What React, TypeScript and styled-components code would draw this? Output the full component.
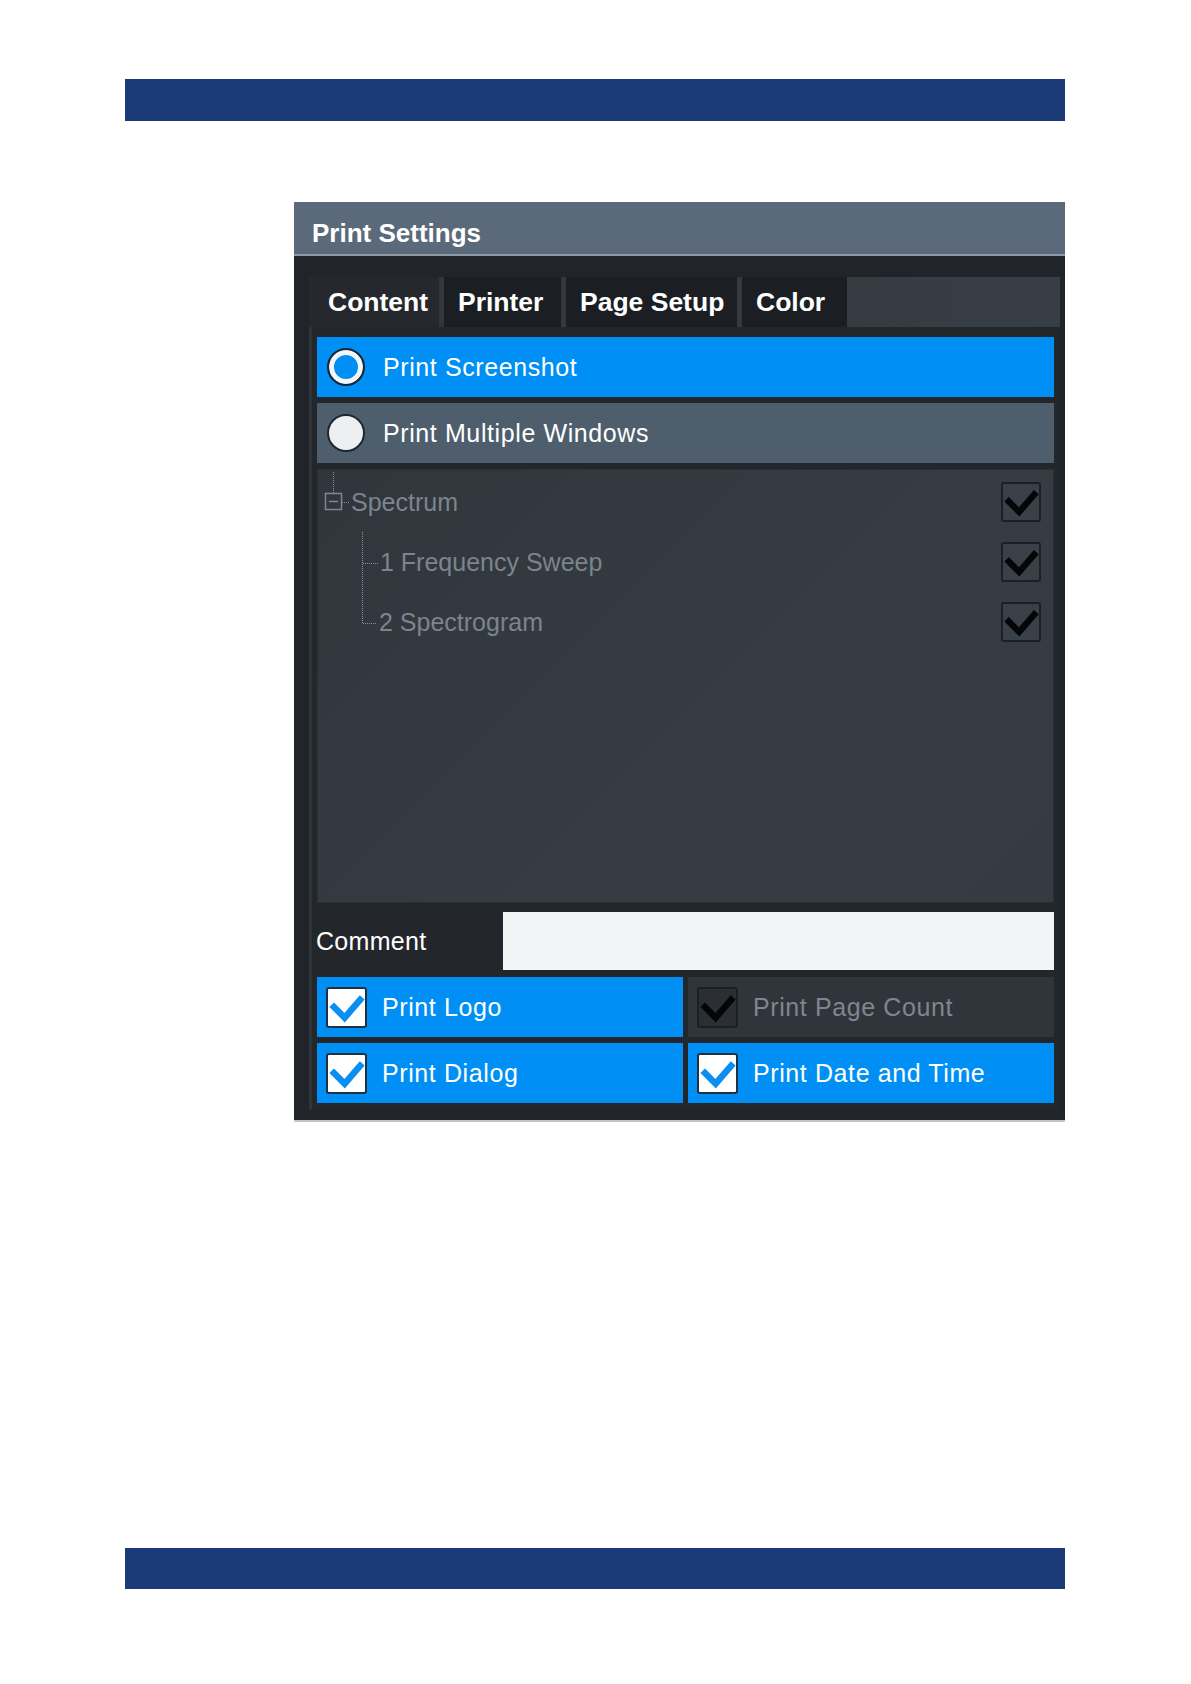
import React from 'react';
import styled, { createGlobalStyle } from 'styled-components';

const GlobalStyle = createGlobalStyle`
  html, body {
    margin: 0;
    padding: 0;
    background: #ffffff;
  }
  body {
    font-family: "Liberation Sans", Arial, sans-serif;
  }
`;

const Sheet = styled.div`
  width: 1191px;
  min-height: 1684px;
  display: flex;
  flex-direction: column;
`;

const Band = styled.div<{ $top: number; $height: number }>`
  margin: ${(p) => p.$top}px 0 0 125px;
  width: 940px;
  height: ${(p) => p.$height}px;
  background: #1b3a78;
`;

const Dialog = styled.div`
  margin: 81px 0 0 294px;
  width: 771px;
  border-bottom: 2px solid #c3c6c9;
`;

const TitleBar = styled.div`
  box-sizing: border-box;
  height: 54px;
  padding: 11px 0 0 18px;
  display: flex;
  align-items: center;
  background: #5b6a7a;
  border-bottom: 2px solid #8e9aa6;
  color: #ffffff;
  font-size: 26px;
  font-weight: bold;
`;

const Body = styled.div`
  box-sizing: border-box;
  height: 864px;
  padding: 21px 5px 10px 15px;
  background: #212428;
  display: flex;
  flex-direction: column;
`;

const TabBar = styled.div`
  height: 50px;
  display: flex;
  gap: 5px;
  background: linear-gradient(90deg, #30353b, #383e45);
`;

const Tab = styled.div<{ $w: number; $active?: boolean }>`
  box-sizing: border-box;
  width: ${(p) => p.$w}px;
  padding-left: ${(p) => (p.$active ? 19 : 14)}px;
  display: flex;
  align-items: center;
  background: ${(p) => (p.$active ? '#25292d' : '#1b1e22')};
  color: #ffffff;
  font-size: 26.5px;
  font-weight: bold;
  white-space: nowrap;
`;

const TabPage = styled.div`
  flex: 1;
  padding: 10px 6px 0 5px;
  border-left: 3px solid #2f343a;
  background: #23272b;
  display: flex;
  flex-direction: column;
  gap: 6px;
`;

const OptionRow = styled.div<{ $selected?: boolean }>`
  height: 60px;
  padding-left: 10px;
  display: flex;
  align-items: center;
  gap: 18px;
  background: ${(p) => (p.$selected ? '#008ff5' : '#4f5e6d')};
  color: #ffffff;
  font-size: 25px;
  letter-spacing: 0.6px;
`;

const Radio = styled.span<{ $on?: boolean }>`
  box-sizing: border-box;
  width: 38px;
  height: 38px;
  border-radius: 50%;
  border: 2px solid #1c2733;
  background: ${(p) => (p.$on ? '#008ff5' : '#eeeff0')};
  box-shadow: ${(p) => (p.$on ? 'inset 0 0 0 5px #f5f6f7' : 'none')};
`;

const TreePanel = styled.div`
  box-sizing: border-box;
  height: 434px;
  padding: 2px 12px 0 0;
  border: 1px solid #2a2f34;
  background: linear-gradient(135deg, #30363c, #363c43 60%, #353b42);
`;

const TreeRow = styled.div`
  height: 60px;
  display: flex;
  align-items: center;
`;

const Connector = styled.svg`
  flex-shrink: 0;
  display: block;
`;

const TreeLabel = styled.span`
  flex: 1;
  color: #7c848d;
  font-size: 25px;
`;

const Box = styled.span<{ $tone: 'light' | 'dark' | 'dim'; $size: number }>`
  box-sizing: border-box;
  flex-shrink: 0;
  width: ${(p) => p.$size}px;
  height: ${(p) => p.$size}px;
  border-radius: 3px;
  overflow: hidden;
  border: 2px solid ${(p) => (p.$tone === 'light' ? '#22313f' : '#1c1f23')};
  background: ${(p) =>
    p.$tone === 'light' ? '#ffffff' : p.$tone === 'dark' ? '#3a4047' : '#2b2f34'};
  display: flex;
`;

const CommentRow = styled.div`
  height: 58px;
  margin: 3px 0 1px;
  display: grid;
  grid-template-columns: 186px 1fr;
  align-items: center;
`;

const CommentLabel = styled.span`
  margin-left: -1px;
  color: #ffffff;
  font-size: 25px;
  letter-spacing: 0.3px;
`;

const CommentInput = styled.input`
  box-sizing: border-box;
  height: 58px;
  width: 100%;
  border: none;
  outline: none;
  background: #f3f4f5;
  font: inherit;
`;

const FlagGrid = styled.div`
  display: grid;
  grid-template-columns: 1fr 1fr;
  gap: 6px 5px;
`;

const Flag = styled.div<{ $on?: boolean }>`
  height: 60px;
  padding-left: 9px;
  display: flex;
  align-items: center;
  gap: 15px;
  background: ${(p) => (p.$on ? '#008ff5' : '#30353b')};
  color: ${(p) => (p.$on ? '#ffffff' : '#7f868e')};
  font-size: 25px;
  letter-spacing: 0.6px;
  white-space: nowrap;
`;

const CheckMark = ({ color, size }: { color: string; size: number }) => (
  <svg width={size} height={size} viewBox="0 0 40 40">
    <polyline
      points="4,17 18,31 37,9"
      fill="none"
      stroke={color}
      strokeWidth="7"
      strokeLinejoin="miter"
    />
  </svg>
);

const Check = ({ tone, size }: { tone: 'light' | 'dark' | 'dim'; size: number }) => (
  <Box $tone={tone} $size={size}>
    <CheckMark color={tone === 'light' ? '#0a8ef2' : '#050607'} size={size - 4} />
  </Box>
);

const dots = { stroke: '#8a9199', strokeWidth: 1, strokeDasharray: '1 1' };

const tree = [
  {
    label: 'Spectrum',
    width: 33,
    lines: (
      <>
        <line x1="15.5" y1="0" x2="15.5" y2="21" {...dots} />
        <rect x="7.5" y="21.5" width="16" height="16" fill="none" stroke="#80888f" strokeWidth="1.5" />
        <line x1="11" y1="29.5" x2="20" y2="29.5" stroke="#80888f" strokeWidth="1.5" />
        <line x1="24" y1="30.5" x2="32" y2="30.5" {...dots} />
      </>
    ),
  },
  {
    label: '1 Frequency Sweep',
    width: 62,
    lines: (
      <>
        <line x1="44.5" y1="0" x2="44.5" y2="60" {...dots} />
        <line x1="45" y1="31.5" x2="60" y2="31.5" {...dots} />
      </>
    ),
  },
  {
    label: '2 Spectrogram',
    width: 61,
    lines: (
      <>
        <line x1="44.5" y1="0" x2="44.5" y2="31" {...dots} />
        <line x1="45" y1="31.5" x2="59" y2="31.5" {...dots} />
      </>
    ),
  },
];

const App: React.FC = () => {
  return (
    <Sheet>
      <GlobalStyle />
      <Band $top={79} $height={42} />
      <Dialog>
        <TitleBar>Print Settings</TitleBar>
        <Body>
          <TabBar>
            <Tab $w={130} $active>Content</Tab>
            <Tab $w={117}>Printer</Tab>
            <Tab $w={171}>Page Setup</Tab>
            <Tab $w={105}>Color</Tab>
          </TabBar>
          <TabPage>
            <OptionRow $selected>
              <Radio $on />
              Print Screenshot
            </OptionRow>
            <OptionRow>
              <Radio />
              Print Multiple Windows
            </OptionRow>
            <TreePanel>
              {tree.map((item) => (
                <TreeRow key={item.label}>
                  <Connector width={item.width} height={60}>
                    {item.lines}
                  </Connector>
                  <TreeLabel>{item.label}</TreeLabel>
                  <Check tone="dark" size={40} />
                </TreeRow>
              ))}
            </TreePanel>
            <CommentRow>
              <CommentLabel>Comment</CommentLabel>
              <CommentInput type="text" />
            </CommentRow>
            <FlagGrid>
              <Flag $on>
                <Check tone="light" size={41} />
                Print Logo
              </Flag>
              <Flag>
                <Check tone="dim" size={41} />
                Print Page Count
              </Flag>
              <Flag $on>
                <Check tone="light" size={41} />
                Print Dialog
              </Flag>
              <Flag $on>
                <Check tone="light" size={41} />
                Print Date and Time
              </Flag>
            </FlagGrid>
          </TabPage>
        </Body>
      </Dialog>
      <Band $top={426} $height={41} />
    </Sheet>
  );
};

export default App;
